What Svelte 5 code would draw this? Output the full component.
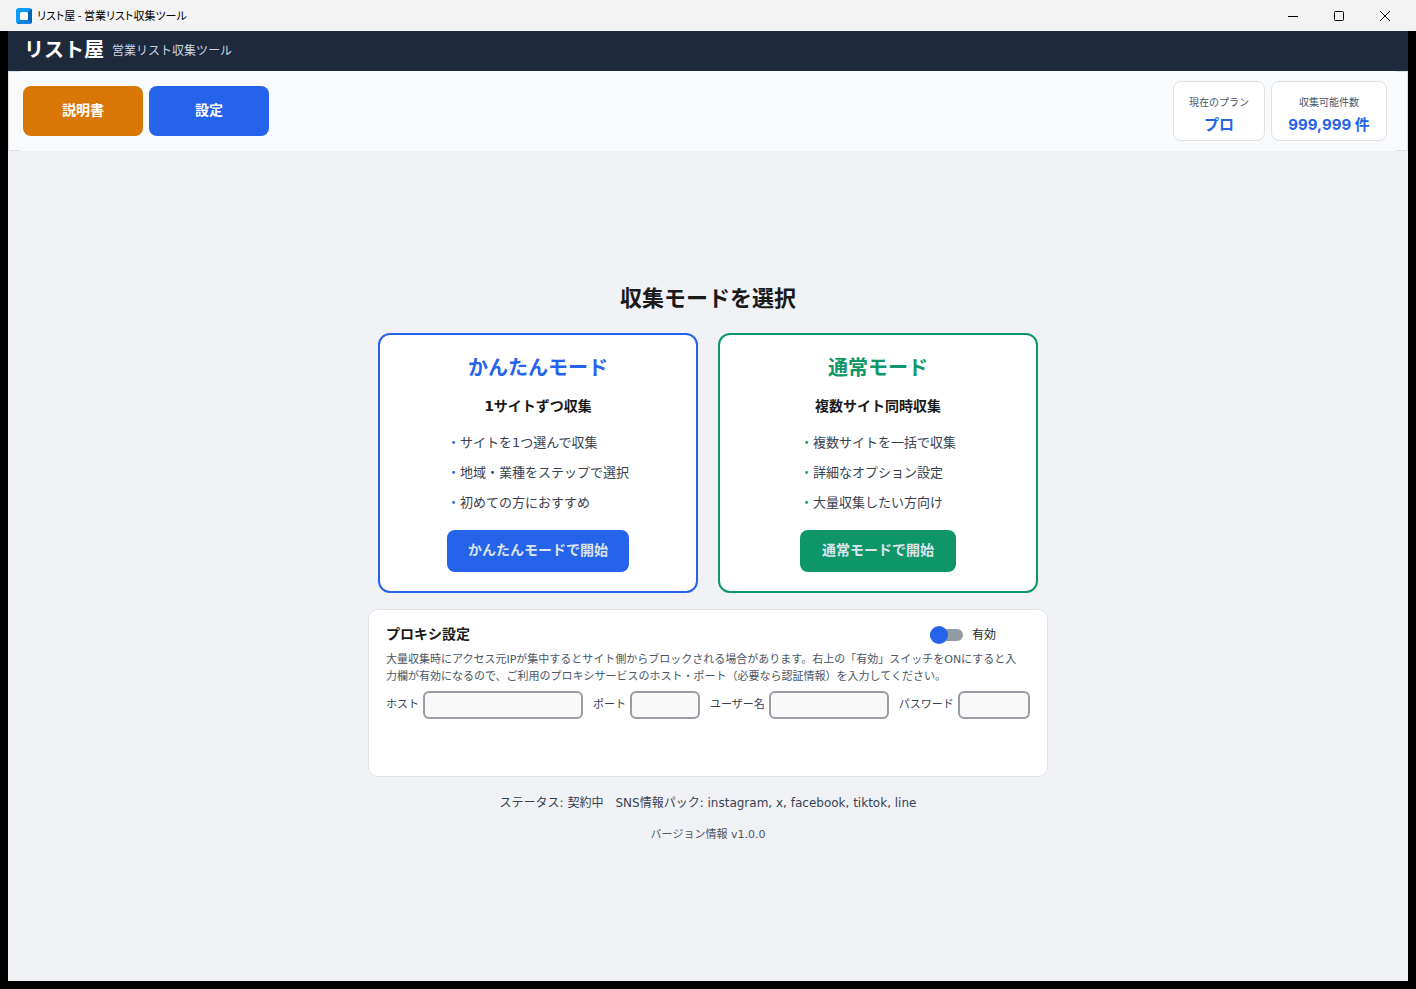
<script lang="ts">
  type Mode = {
    id: string;
    title: string;
    lead: string;
    points: string[];
    action: string;
  };

  const modes: Mode[] = [
    {
      id: 'easy',
      title: 'かんたんモード',
      lead: '1サイトずつ収集',
      points: ['サイトを1つ選んで収集', '地域・業種をステップで選択', '初めての方におすすめ'],
      action: 'かんたんモードで開始'
    },
    {
      id: 'normal',
      title: '通常モード',
      lead: '複数サイト同時収集',
      points: ['複数サイトを一括で収集', '詳細なオプション設定', '大量収集したい方向け'],
      action: '通常モードで開始'
    }
  ];

  let proxyEnabled = $state(false);
</script>

<div class="window">
  <div class="titlebar">
    <svg class="app-icon" viewBox="0 0 16 16">
      <rect width="16" height="16" rx="3" fill="#0a9bfb" />
      <path d="M12 4 L15.2 0.9 Q16 1.6 16 3 V13 Q16 16 13 16 H3 Q1.6 16 0.9 15.2 L4 12 H12 Z" fill="#0a84e0" />
      <path d="M12 4 L15.2 0.9 Q16 1.6 16 3 V13 Q16 14.4 15.2 15.2 L12 12 Z" fill="#0763b0" />
      <rect x="4" y="4" width="8" height="8" rx="1.5" fill="#fff" />
    </svg>
    <span class="caption">リスト屋 - 営業リスト収集ツール</span>
    <button class="win-button" aria-label="最小化">
      <svg viewBox="0 0 10 10"><path d="M0 5.5 H10" /></svg>
    </button>
    <button class="win-button" aria-label="最大化">
      <svg viewBox="0 0 10 10"><rect x="0.5" y="0.5" width="9" height="9" rx="1" /></svg>
    </button>
    <button class="win-button" aria-label="閉じる">
      <svg viewBox="0 0 10 10"><path d="M0 0 L10 10 M10 0 L0 10" /></svg>
    </button>
  </div>

  <div class="client">
    <header>
      <h1>リスト屋</h1>
      <span>営業リスト収集ツール</span>
    </header>

    <div class="toolbar">
      <div class="toolbar-inner">
        <button class="tool manual">説明書</button>
        <button class="tool settings">設定</button>
        <div class="stat plan">
          <span>現在のプラン</span>
          <strong>プロ</strong>
        </div>
        <div class="stat quota">
          <span>収集可能件数</span>
          <strong>999,999 件</strong>
        </div>
      </div>
    </div>

    <main>
      <h2>収集モードを選択</h2>

      <div class="modes">
        {#each modes as mode (mode.id)}
          <section class="card {mode.id}">
            <h3>{mode.title}</h3>
            <p>{mode.lead}</p>
            <div class="body">
              <ul>
                {#each mode.points as point}
                  <li><span>・</span>{point}</li>
                {/each}
              </ul>
              <button>{mode.action}</button>
            </div>
          </section>
        {/each}
      </div>

      <section class="proxy">
        <div class="proxy-head">
          <h3>プロキシ設定</h3>
          <label class="switch">
            <input type="checkbox" bind:checked={proxyEnabled} />
            有効
          </label>
        </div>
        <p>
          大量収集時にアクセス元IPが集中するとサイト側からブロックされる場合があります。右上の「有効」スイッチをONにすると入<br />力欄が有効になるので、ご利用のプロキシサービスのホスト・ポート（必要なら認証情報）を入力してください。
        </p>
        <div class="fields">
          <label for="host">ホスト</label>
          <input id="host" class="host" type="text" disabled={!proxyEnabled} />
          <label for="port">ポート</label>
          <input id="port" class="port" type="text" disabled={!proxyEnabled} />
          <label for="user">ユーザー名</label>
          <input id="user" class="user" type="text" disabled={!proxyEnabled} />
          <label for="password">パスワード</label>
          <input id="password" class="password" type="password" disabled={!proxyEnabled} />
        </div>
      </section>

      <p class="status">ステータス: 契約中　SNS情報パック: instagram, x, facebook, tiktok, line</p>
      <p class="version">バージョン情報 v1.0.0</p>
    </main>
  </div>
</div>

<style>
  :global(body) {
    margin: 0;
    background: #000;
  }

  .window {
    display: flex;
    flex-direction: column;
    min-height: 100vh;
    font-family: "DejaVu Sans", "Noto Sans CJK JP", sans-serif;
    color: #1a1a1a;
  }

  h1, h2, h3, p, ul {
    margin: 0;
    padding: 0;
  }

  button, input {
    font-family: inherit;
    box-sizing: border-box;
  }

  button {
    border: none;
    padding: 0;
    cursor: pointer;
  }

  /* title bar */
  .titlebar {
    display: flex;
    align-items: center;
    height: 31px;
    padding-left: 16px;
    padding-right: 8px;
    background: #f3f3f3;
  }

  .app-icon {
    width: 16px;
    height: 16px;
    margin-right: 5px;
  }

  .caption {
    flex: 1;
    padding-bottom: 2px;
    font-family: "Noto Sans CJK JP", sans-serif;
    font-size: 11px;
    line-height: 18px;
    font-feature-settings: "palt";
    color: #000;
  }

  .win-button {
    display: flex;
    align-items: center;
    justify-content: center;
    width: 46px;
    height: 30px;
    background: none;
  }

  .win-button svg {
    width: 10px;
    height: 10px;
    fill: none;
    stroke: #000;
    stroke-width: 1px;
  }

  .client {
    flex: 1;
    display: flex;
    flex-direction: column;
    margin: 0 8px 8px;
    background: #f0f2f6;
  }

  header {
    display: flex;
    align-items: center;
    gap: 8px;
    height: 40px;
    padding: 0 16px;
    background: #1e293b;
  }

  header h1 {
    padding-bottom: 2px;
    font-size: 20px;
    line-height: 30px;
    color: #fff;
  }

  header span {
    font-size: 12px;
    line-height: 18px;
    color: #cbd5e1;
  }

  .toolbar {
    border: 1px solid #dee2e6;
    background: #f8fafc;
  }

  /* covers the long edges, so the border only shows at the corners */
  .toolbar-inner {
    display: flex;
    align-items: center;
    gap: 6px;
    height: 80px;
    margin: -1px 11px;
    padding: 0 9px 0 3px;
    box-sizing: border-box;
    background: #f8fafc;
  }

  .tool {
    width: 120px;
    height: 50px;
    padding-bottom: 4px;
    border-radius: 8px;
    font-size: 14px;
    font-weight: bold;
    color: #fff;
  }

  .manual {
    background: #d97706;
  }

  .settings {
    background: #2563eb;
  }

  .stat {
    display: flex;
    flex-direction: column;
    align-items: center;
    height: 60px;
    padding: 13px 15px 0;
    box-sizing: border-box;
    border: 1px solid #dee2e6;
    border-radius: 8px;
    background: #fff;
  }

  .plan {
    margin-left: auto;
  }

  .quota {
    min-width: 116px;
  }

  .stat span {
    font-size: 10px;
    line-height: 16px;
    color: #475569;
  }

  .stat strong {
    font-family: Inter, "Noto Sans CJK JP", sans-serif;
    font-size: 15px;
    line-height: 28px;
    white-space: nowrap;
    color: #2563eb;
  }

  main {
    flex: 1;
    display: flex;
    flex-direction: column;
    align-items: center;
    justify-content: center;
  }

  h2 {
    margin-bottom: 18px;
    font-size: 22px;
    line-height: 33px;
  }

  /* mode cards */
  .modes {
    display: flex;
    gap: 20px;
  }

  .card {
    display: flex;
    flex-direction: column;
    align-items: center;
    width: 320px;
    padding: 18px 0 19px;
    box-sizing: border-box;
    border: 2px solid var(--accent);
    border-radius: 12px;
    background: #fff;
  }

  .easy {
    --accent: #2563eb;
  }

  .normal {
    --accent: #0f9668;
  }

  .card h3 {
    font-size: 20px;
    line-height: 30px;
    color: var(--accent);
  }

  .card p {
    margin: 12px 0 10px;
    font-size: 14px;
    font-weight: bold;
    line-height: 23px;
  }

  .body {
    display: flex;
    flex-direction: column;
  }

  ul {
    margin-bottom: 12px;
    list-style: none;
    font-size: 13px;
    line-height: 30px;
    color: #374151;
  }

  li {
    height: 30px;
  }

  li span {
    color: var(--accent);
  }

  .body button {
    height: 42px;
    padding: 0 21px 4px;
    border-radius: 8px;
    background: var(--accent);
    font-size: 14px;
    font-weight: bold;
    white-space: nowrap;
    color: #dce4ee;
  }

  /* proxy settings */
  .proxy {
    width: 680px;
    min-height: 168px;
    margin: 16px 0;
    padding: 14px 17px;
    box-sizing: border-box;
    border: 1px solid #dee2e6;
    border-radius: 10px;
    background: #fff;
  }

  .proxy-head {
    display: flex;
    align-items: flex-end;
    justify-content: space-between;
    height: 20px;
    margin-bottom: 7px;
  }

  .proxy-head h3 {
    font-size: 14px;
    line-height: 20px;
  }

  .switch {
    display: flex;
    align-items: center;
    gap: 9px;
    width: 100px;
    font-size: 12px;
    line-height: 18px;
  }

  .switch input {
    appearance: none;
    position: relative;
    width: 33px;
    height: 18px;
    margin: 0;
  }

  .switch input::before {
    content: "";
    position: absolute;
    inset: 3px 0;
    border-radius: 6px;
    background: #939ba2;
  }

  .switch input::after {
    content: "";
    position: absolute;
    top: 0;
    left: 0;
    width: 18px;
    height: 18px;
    border-radius: 50%;
    background: #2563eb;
  }

  .switch input:checked::after {
    left: 15px;
  }

  .proxy p {
    margin-bottom: 6px;
    font-size: 11px;
    line-height: 17px;
    white-space: nowrap;
    color: #4b5563;
  }

  .fields {
    display: flex;
    align-items: center;
    font-size: 11px;
    line-height: 17px;
    color: #374151;
  }

  .fields label {
    margin-right: 4px;
    padding-bottom: 2px;
    white-space: nowrap;
  }

  .fields input {
    height: 28px;
    margin-right: 10px;
    padding: 0 6px;
    border: 2px solid #979da2;
    border-radius: 6px;
    background: #f9f9fa;
  }

  .host {
    width: 160px;
  }

  .port {
    width: 70px;
  }

  .user {
    width: 120px;
  }

  .fields .password {
    flex: 1;
    min-width: 0;
    margin-right: 0;
  }

  .status {
    margin: 1px 0 14px;
    font-size: 12px;
    line-height: 18px;
    color: #374151;
  }

  .version {
    margin-bottom: 6px;
    font-size: 11px;
    line-height: 18px;
    color: #4b5563;
  }
</style>
